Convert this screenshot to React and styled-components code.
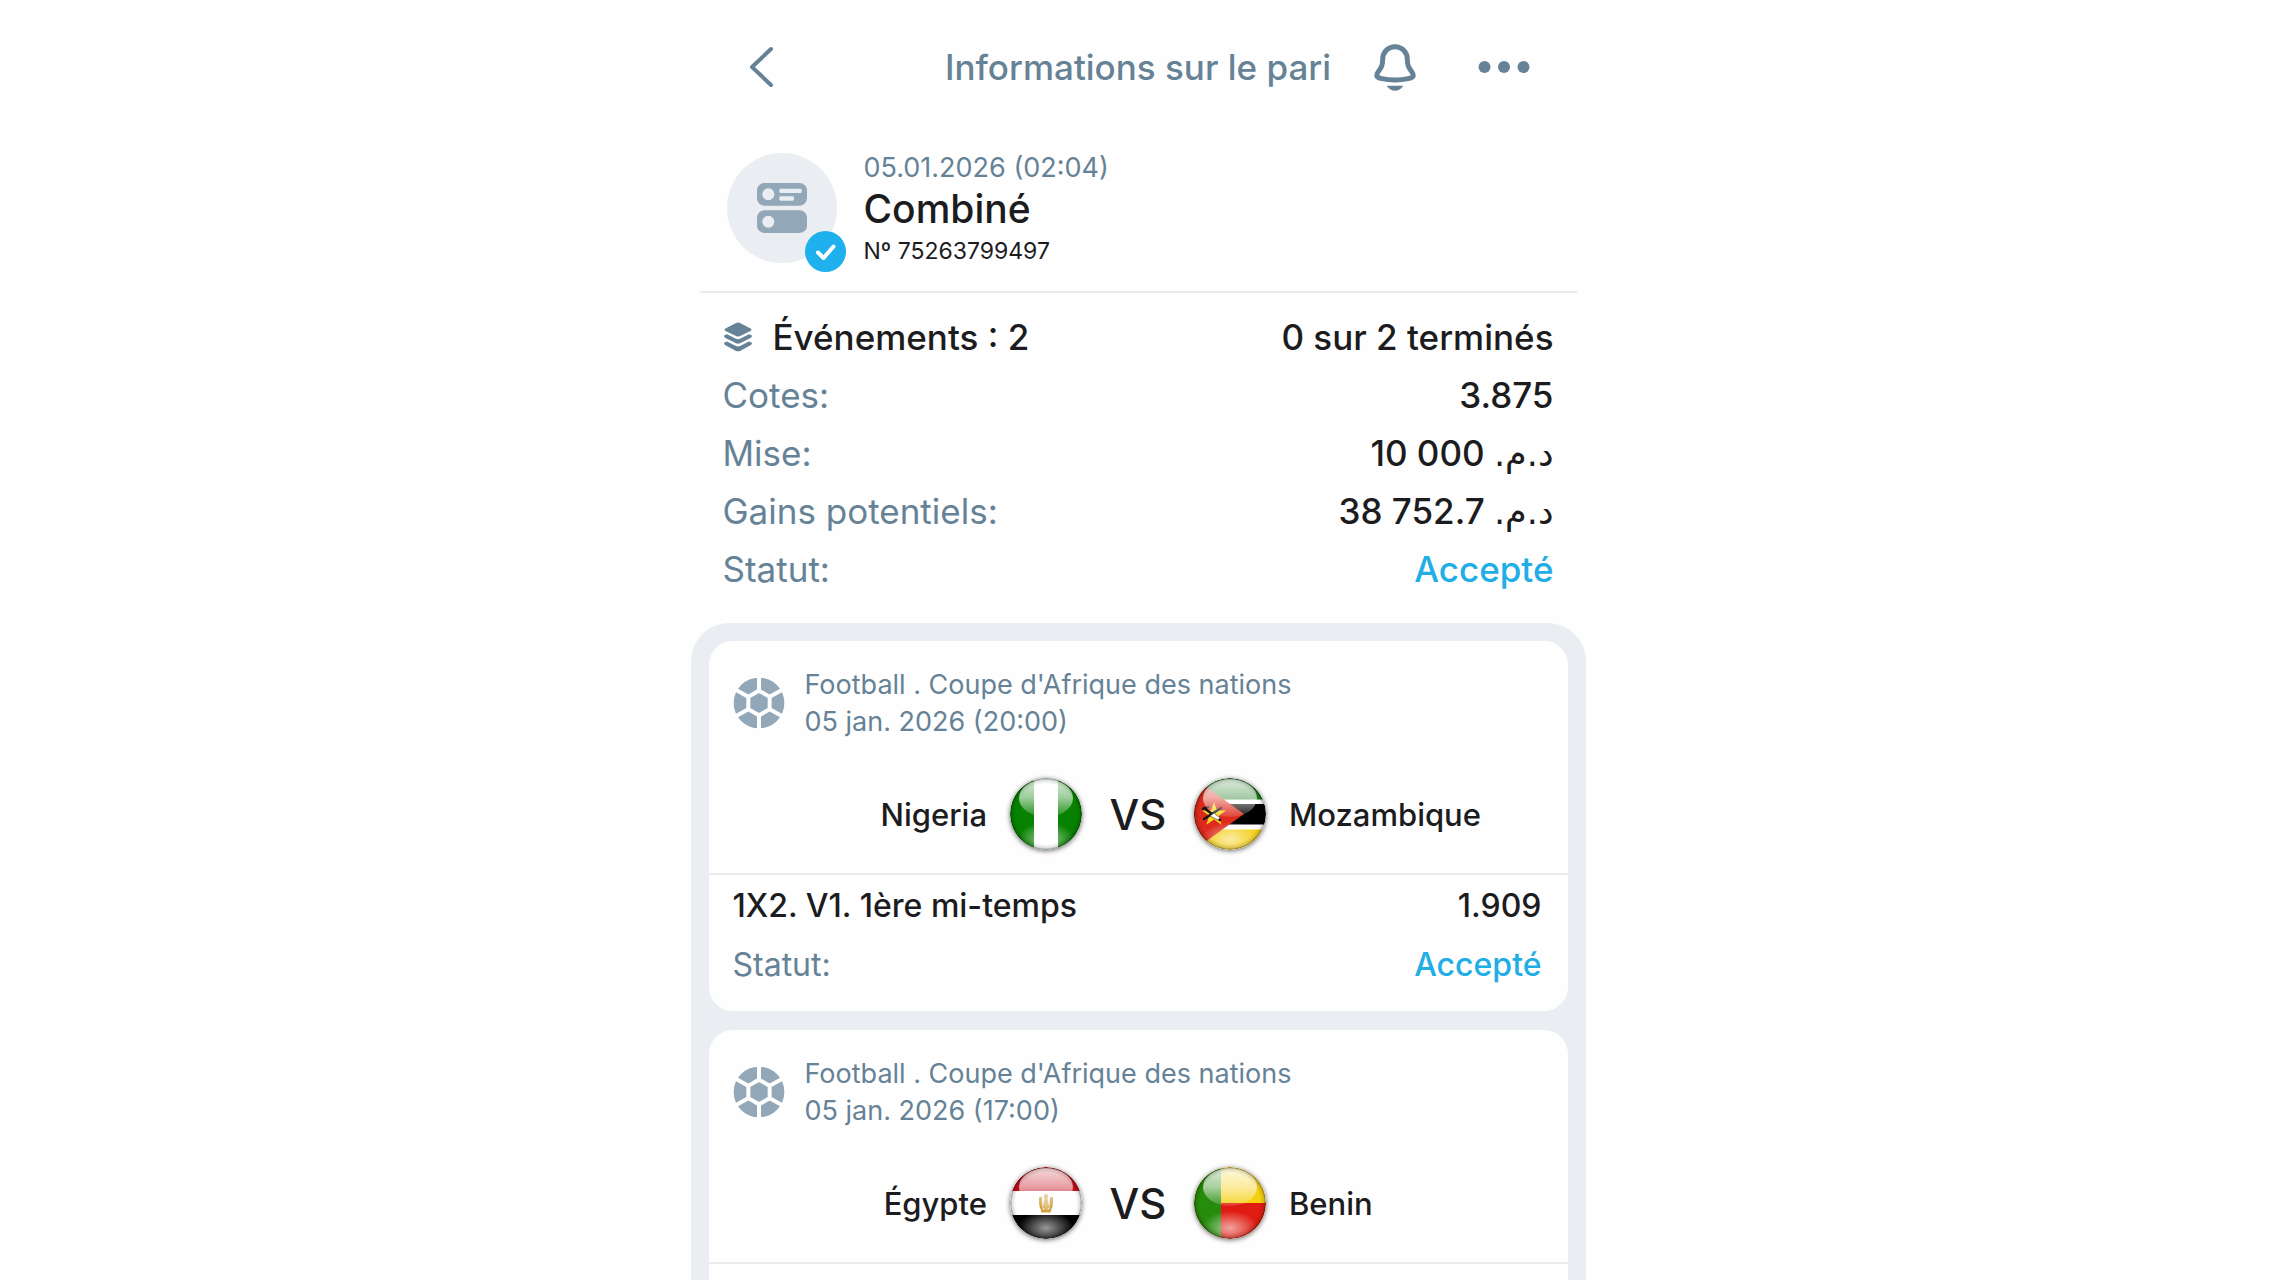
import React, { useId } from "react";
import styled, { createGlobalStyle } from "styled-components";

const color = {
  page: "#fefefe",
  slate: "#668296",
  muted: "#92a8b8",
  ink: "#1c1c1e",
  accent: "#21ade5",
  badge: "#1fb1ed",
  panel: "#eaeef3",
  rule: "#e9ebee",
};

const GlobalStyle = createGlobalStyle`
  *, *::before, *::after { box-sizing: border-box; }
  body {
    margin: 0;
    background: ${color.page};
    color: ${color.ink};
    font-family: Inter, "Noto Sans", "DejaVu Sans", sans-serif;
  }
  h1, h2, p, dl, dt, dd { margin: 0; font: inherit; }
`;

const Screen = styled.main`
  display: flex;
  flex-direction: column;
  width: 100%;
  max-width: 895px;
  height: 100vh;
  margin: 0 auto;
  overflow: hidden;
`;

const TopBar = styled.header`
  flex: none;
  display: grid;
  grid-template-columns: 1fr auto 1fr;
  align-items: center;
  height: 134px;
  padding: 0 56px;
`;

const IconButton = styled.button`
  display: flex;
  justify-self: start;
  padding: 0;
  border: 0;
  background: none;
  color: ${color.slate};
  cursor: pointer;
`;

const Title = styled.h1`
  color: ${color.slate};
  font-size: 35px;
  font-weight: 500;
  line-height: 44px;
  white-space: nowrap;
`;

const Actions = styled.div`
  display: flex;
  align-items: center;
  justify-content: space-between;
  padding-left: 43px;
`;

const Ticket = styled.section`
  flex: none;
  display: flex;
  gap: 27px;
  margin: 0 9px;
  padding: 19px 27px 22px;
  border-bottom: 2px solid ${color.rule};
`;

const Avatar = styled.div`
  position: relative;
  flex: none;
  display: grid;
  place-items: center;
  width: 110px;
  height: 110px;
  border-radius: 50%;
  background: ${color.panel};
`;

const Badge = styled.span`
  position: absolute;
  right: -9px;
  bottom: -9px;
  display: flex;
  border-radius: 50%;
  background: ${color.badge};
`;

const TicketDate = styled.p`
  color: ${color.slate};
  font-size: 27px;
  line-height: 30px;
`;

const TicketType = styled.h2`
  font-size: 39px;
  font-weight: 500;
  line-height: 51px;
`;

const TicketNumber = styled.p`
  font-size: 23px;
  line-height: 35px;
`;

const Summary = styled.dl`
  flex: none;
  padding: 15px 32px 25px;
`;

const SummaryRow = styled.div`
  display: flex;
  align-items: center;
  justify-content: space-between;
  height: 58px;
  font-size: 35px;
`;

const Label = styled.dt`
  display: flex;
  align-items: center;
  gap: 20px;
  color: ${(p) => (p.$strong ? color.ink : color.slate)};
  font-weight: ${(p) => (p.$strong ? 500 : 400)};
`;

const Value = styled.dd`
  color: ${(p) => (p.$accent ? color.accent : color.ink)};
  font-weight: 500;
`;

const Currency = styled.bdi`
  font-family: "DejaVu Sans", sans-serif;
  font-size: 35px;
  line-height: 1;
`;

const EventList = styled.section`
  flex: 1;
  min-height: 0;
  display: flex;
  flex-direction: column;
  gap: 19px;
  padding: 18px;
  border-radius: 38px 38px 0 0;
  background: ${color.panel};
`;

const Card = styled.article`
  flex: none;
  min-height: 370px;
  border-radius: 24px;
  background: ${color.page};
`;

const CardHeader = styled.div`
  display: flex;
  align-items: center;
  gap: 20px;
  padding: 25px 24px 0;
  color: ${color.slate};
  font-size: 27px;
  line-height: 37px;
`;

const Teams = styled.div`
  display: grid;
  grid-template-columns: 1fr 72px 112px 72px 1fr;
  align-items: center;
  padding: 38px 0 23px;
  border-bottom: 2px solid ${color.rule};
`;

const Team = styled.span`
  padding: 0 23px;
  font-size: 31px;
  font-weight: 500;
  text-align: ${(p) => (p.$home ? "right" : "left")};
`;

const Versus = styled.span`
  font-size: 42px;
  font-weight: 500;
  text-align: center;
`;

const FlagDisc = styled.svg`
  display: block;
  width: 72px;
  height: 72px;
  border-radius: 50%;
  box-shadow: 0 1px 5px rgba(0, 0, 0, 0.6);
`;

const Bet = styled.dl`
  padding: 0 26px 17px 24px;
`;

const BetRow = styled.div`
  display: flex;
  align-items: center;
  justify-content: space-between;
  height: 60px;
  font-size: 32px;

  & + & {
    height: 59px;
  }
`;

const BackIcon = () => (
  <svg width="28" height="44" viewBox="0 0 28 44" fill="none" stroke="currentColor" strokeWidth="4" strokeLinecap="round" strokeLinejoin="round" aria-hidden="true">
    <path d="M24 4 5 22l19 18" />
  </svg>
);

const BellIcon = () => (
  <svg width="42" height="48" viewBox="102 68 126 144" aria-hidden="true">
    <path d="M165 79C143 79 128 97 128 117C128 136 124 141 115 154C107 166 109 171 122 174Q165 184 208 174C221 171 223 166 215 154C206 141 202 136 202 117C202 97 187 79 165 79Z" fill="none" stroke="currentColor" strokeWidth="15" />
    <path d="M140 196H190Q180 211 165 211Q150 211 140 196Z" fill="currentColor" />
  </svg>
);

const DotsIcon = () => (
  <svg width="52" height="14" viewBox="0 0 52 14" fill="currentColor" aria-hidden="true">
    <circle cx="6.5" cy="7" r="6" />
    <circle cx="26" cy="7" r="6" />
    <circle cx="45.5" cy="7" r="6" />
  </svg>
);

const CombiIcon = () => (
  <svg width="50" height="50" viewBox="141 130 150 150" fill={color.muted} aria-hidden="true">
    <rect x="141" y="130" width="150" height="68" rx="22" />
    <rect x="141" y="212" width="150" height="68" rx="22" />
    <g fill={color.panel}>
      <circle cx="175" cy="164" r="18" />
      <circle cx="175" cy="246" r="18" />
      <rect x="208" y="147" width="67" height="13" rx="4" />
      <rect x="208" y="170" width="44" height="13" rx="4" />
    </g>
  </svg>
);

const CheckIcon = () => (
  <svg width="41" height="41" viewBox="0 0 41 41" fill="none" stroke="#fff" strokeWidth="4" strokeLinecap="round" strokeLinejoin="round" aria-hidden="true">
    <path d="M13 21.500 18.500 27 28.500 15.500" />
  </svg>
);

const LayersIcon = () => (
  <svg width="30" height="30" viewBox="0 0 30 30" fill={color.slate} aria-hidden="true">
    <path d="M15 0.500Q16 0.500 17 1L27.500 6.500Q29.500 7.700 27.500 9L17 14Q15 15 13 14L2.500 9Q0.500 7.700 2.500 6.500L13 1Q14 0.500 15 0.500Z" />
    <path d="M1 13.500 4 12.300 13 16.800Q15 17.700 17 16.800L26 12.300 29 13.500Q29 15.200 27.500 16L17 21.300Q15 22.200 13 21.300L2.500 16Q1 15.200 1 13.500Z" />
    <path d="M1 20.800 4 19.600 13 24.100Q15 25 17 24.100L26 19.600 29 20.800Q29 22.500 27.500 23.300L17 28.900Q15 29.800 13 28.900L2.500 23.300Q1 22.500 1 20.800Z" />
  </svg>
);

const BallIcon = () => (
  <svg width="52" height="52" viewBox="-78 -78 156 156" aria-hidden="true">
    <circle r="76" fill={color.muted} />
    <g fill="none" stroke={color.page} strokeWidth="12">
      <path d="M0-37 32-18.500V18.500L0 37-32 18.500V-18.500Z" />
      <path d="M0-37V-80M0 37V80M32-18.500 70-40M32 18.500 70 40M-32-18.500-70-40M-32 18.500-70 40" />
    </g>
  </svg>
);

const flagArt = {
  nigeria: (
    <>
      <rect width="72" height="72" fill="#078200" />
      <rect x="24" width="24" height="72" fill="#fff" />
    </>
  ),
  mozambique: (
    <>
      <rect width="72" height="72" fill="#fff" />
      <rect width="72" height="21.500" fill="#1d7a1d" />
      <rect y="26" width="72" height="20.500" fill="#000" />
      <rect y="51.500" width="72" height="21" fill="#f4cf1c" />
      <path d="M0 0 50 36 0 72Z" fill="#dd2a1c" />
      <path d="M20 24l3 8.500h9l-7.200 5.300 2.800 9L20 41.500l-7.600 5.300 2.800-9L8 32.500h9Z" fill="#fbd51d" />
      <path d="M10 41 27 30M10 30l16 12M9 31l5-2" stroke="#161616" strokeWidth="2.400" strokeLinecap="round" />
      <path d="M16 38l4-3 6 5-2 2Z" fill="#fff" stroke="#333" strokeWidth=".6" />
    </>
  ),
  egypt: (
    <>
      <rect width="72" height="72" fill="#fff" />
      <rect width="72" height="24" fill="#c30d18" />
      <rect y="48" width="72" height="24" fill="#000" />
      <g fill="#d2a341">
        <path d="M29 30.500q1.500-1.500 3 0l.5 11 1.500 2h-2.500q-3-3-2.500-13ZM43 30.500q-1.500-1.500-3 0l-.5 11-1.500 2h2.500q3-3 2.500-13Z" />
        <path d="M36 26.500l2.500 2-1 3 2 9-3.500 3-3.500-3 2-9-1-3Z" opacity=".75" />
        <rect x="31" y="42.500" width="10" height="3" rx="1" />
      </g>
    </>
  ),
  benin: (
    <>
      <rect width="72" height="72" fill="#f5cf12" />
      <rect y="36" width="72" height="36" fill="#e01c12" />
      <rect width="27" height="72" fill="#268c0c" />
    </>
  ),
};

function Flag({ country, name }) {
  const id = useId();
  return (
    <FlagDisc viewBox="0 0 72 72" role="img" aria-label={name}>
      <defs>
        <clipPath id={`${id}c`}><circle cx="36" cy="36" r="36" /></clipPath>
        <radialGradient id={`${id}e`}>
          <stop offset=".84" stopColor="#000" stopOpacity="0" />
          <stop offset=".94" stopColor="#000" stopOpacity=".12" />
          <stop offset="1" stopColor="#000" stopOpacity=".5" />
        </radialGradient>
        <linearGradient id={`${id}t`} x1="0" y1="0" x2="0" y2="1">
          <stop offset="0" stopColor="#fff" stopOpacity=".85" />
          <stop offset=".5" stopColor="#fff" stopOpacity=".6" />
          <stop offset="1" stopColor="#fff" stopOpacity=".12" />
        </linearGradient>
        <radialGradient id={`${id}b`}>
          <stop offset="0" stopColor="#fff" stopOpacity=".6" />
          <stop offset="1" stopColor="#fff" stopOpacity="0" />
        </radialGradient>
      </defs>
      <g clipPath={`url(#${id}c)`}>
        {flagArt[country]}
        <ellipse cx="36" cy="61" rx="28" ry="17" fill={`url(#${id}b)`} />
        <ellipse cx="36" cy="20" rx="27" ry="19" fill={`url(#${id}t)`} />
        <circle cx="36" cy="36" r="36" fill={`url(#${id}e)`} />
      </g>
    </FlagDisc>
  );
}

const events = [
  {
    date: "05 jan. 2026 (20:00)",
    home: { name: "Nigeria", flag: "nigeria" },
    away: { name: "Mozambique", flag: "mozambique" },
    bet: { market: "1X2. V1. 1ère mi-temps", odds: "1.909", status: "Accepté" },
  },
  {
    date: "05 jan. 2026 (17:00)",
    home: { name: "Égypte", flag: "egypt" },
    away: { name: "Benin", flag: "benin" },
  },
];

function EventCard({ event }) {
  const { home, away, bet } = event;
  return (
    <Card>
      <CardHeader>
        <BallIcon />
        <div>
          <p>Football . Coupe d'Afrique des nations</p>
          <p>{event.date}</p>
        </div>
      </CardHeader>
      <Teams>
        <Team $home>{home.name}</Team>
        <Flag country={home.flag} name={home.name} />
        <Versus>VS</Versus>
        <Flag country={away.flag} name={away.name} />
        <Team>{away.name}</Team>
      </Teams>
      {bet && (
        <Bet>
          <BetRow>
            <Label $strong>{bet.market}</Label>
            <Value>{bet.odds}</Value>
          </BetRow>
          <BetRow>
            <Label>Statut:</Label>
            <Value $accent>{bet.status}</Value>
          </BetRow>
        </Bet>
      )}
    </Card>
  );
}

const Dirham = () => <Currency dir="rtl">د.م.</Currency>;

export default function App() {
  return (
    <>
      <GlobalStyle />
      <Screen>
        <TopBar>
          <IconButton type="button" aria-label="Retour"><BackIcon /></IconButton>
          <Title>Informations sur le pari</Title>
          <Actions>
            <IconButton type="button" aria-label="Notifications"><BellIcon /></IconButton>
            <IconButton type="button" aria-label="Plus d'options"><DotsIcon /></IconButton>
          </Actions>
        </TopBar>
        <Ticket>
          <Avatar>
            <CombiIcon />
            <Badge><CheckIcon /></Badge>
          </Avatar>
          <div>
            <TicketDate>05.01.2026 (02:04)</TicketDate>
            <TicketType>Combiné</TicketType>
            <TicketNumber>Nº 75263799497</TicketNumber>
          </div>
        </Ticket>
        <Summary>
          <SummaryRow>
            <Label $strong><LayersIcon />Événements : 2</Label>
            <Value>0 sur 2 terminés</Value>
          </SummaryRow>
          <SummaryRow>
            <Label>Cotes:</Label>
            <Value>3.875</Value>
          </SummaryRow>
          <SummaryRow>
            <Label>Mise:</Label>
            <Value>10 000 <Dirham /></Value>
          </SummaryRow>
          <SummaryRow>
            <Label>Gains potentiels:</Label>
            <Value>38 752.7 <Dirham /></Value>
          </SummaryRow>
          <SummaryRow>
            <Label>Statut:</Label>
            <Value $accent>Accepté</Value>
          </SummaryRow>
        </Summary>
        <EventList>
          {events.map((event) => (
            <EventCard key={event.date} event={event} />
          ))}
        </EventList>
      </Screen>
    </>
  );
}
